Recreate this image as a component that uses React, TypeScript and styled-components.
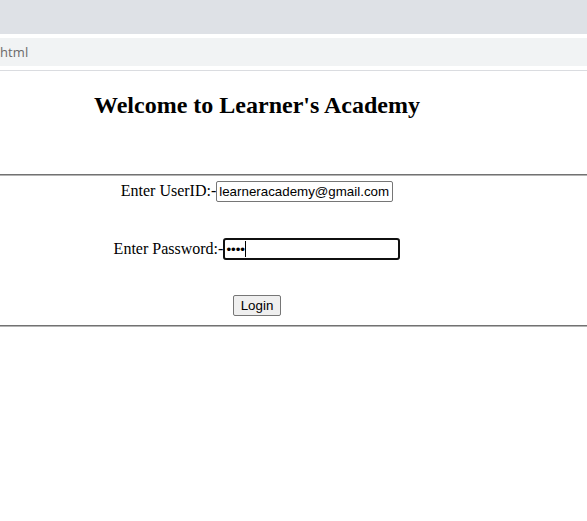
import React from "react";
import styled, { createGlobalStyle } from "styled-components";

const Global = createGlobalStyle`
  html, body { margin: 0; padding: 0; background: #ffffff; }
  body { width: 587px; height: 521px; overflow: hidden; font-family: "Liberation Serif", "Times New Roman", serif; }
`;

const TabStrip = styled.div`
  height: 34px;
  background: #dee1e6;
`;

const Toolbar = styled.div`
  background: #ffffff;
  padding: 4px 0;
  border-bottom: 1px solid #dadce0;
`;

const AddressBar = styled.div`
  height: 28px;
  background: #f1f3f4;
  display: flex;
  align-items: center;
  overflow: hidden;
`;

const Url = styled.span`
  font-family: "Open Sans", "Noto Sans", sans-serif;
  font-size: 13px;
  color: #6b6a6a;
  margin-left: 0;
  letter-spacing: 0.1px;
`;

const Page = styled.main`
  padding-top: 20px;
`;

const Heading = styled.h2`
  width: 514px;
  margin: 0 0 55px;
  text-align: center;
  font-family: "Liberation Serif", "Times New Roman", serif;
  font-weight: bold;
  font-size: 24px;
  line-height: 28px;
  color: #000;
`;

const Rule = styled.hr`
  margin: 0;
  height: 0;
  border: none;
  border-top: 1px solid #727272;
  border-bottom: 1px solid #b4b4b4;
`;

const Form = styled.form`
  width: 514px;
  display: flex;
  flex-direction: column;
  align-items: center;
  padding-top: 5px;
  padding-bottom: 9px;
`;

const Row = styled.div<{ $gap: number }>`
  display: flex;
  align-items: baseline;
  justify-content: center;
  height: 21px;
  margin-top: ${(p) => p.$gap}px;
`;

const Label = styled.label`
  font-family: "Liberation Serif", "Times New Roman", serif;
  font-size: 16px;
  color: #000;
`;

const Field = styled.span`
  position: relative;
  display: inline-flex;
`;

const Input = styled.input<{ $focused?: boolean }>`
  box-sizing: border-box;
  width: 177px;
  height: ${(p) => (p.$focused ? 22 : 21)}px;
  margin: 0;
  padding: ${(p) => (p.$focused ? "1px 1px" : "1px 2px")};
  font-family: "Liberation Sans", Arial, sans-serif;
  font-size: 13.333px;
  color: #000;
  background: #fff;
  border: ${(p) => (p.$focused ? "2px solid #101010" : "1px solid #767676")};
  border-radius: ${(p) => (p.$focused ? 3 : 2)}px;
  outline: none;
`;

const Caret = styled.span`
  position: absolute;
  left: 22px;
  top: 3px;
  width: 1px;
  height: 16px;
  background: #000;
`;

const Button = styled.button`
  box-sizing: border-box;
  height: 21px;
  margin: 0;
  padding: 1px 7px;
  font-family: "Liberation Sans", Arial, sans-serif;
  font-size: 13.333px;
  color: #000;
  background: #efefef;
  border: 1px solid #767676;
  border-radius: 2px;
`;

export default function App() {
  return (
    <>
      <Global />
      <TabStrip />
      <Toolbar>
        <AddressBar>
          <Url>html</Url>
        </AddressBar>
      </Toolbar>
      <Page>
        <Heading>Welcome to Learner's Academy</Heading>
        <Rule />
        <Form onSubmit={(e) => e.preventDefault()}>
          <Row $gap={0}>
            <Label htmlFor="uid">Enter UserID:-</Label>
            <Input id="uid" type="text" defaultValue="learneracademy@gmail.com" readOnly />
          </Row>
          <Row $gap={36}>
            <Label htmlFor="pwd">Enter Password:-</Label>
            <Field>
              <Input id="pwd" type="password" defaultValue="1234" readOnly $focused />
              <Caret />
            </Field>
          </Row>
          <Row $gap={36}>
            <Button type="submit">Login</Button>
          </Row>
        </Form>
        <Rule />
      </Page>
    </>
  );
}
